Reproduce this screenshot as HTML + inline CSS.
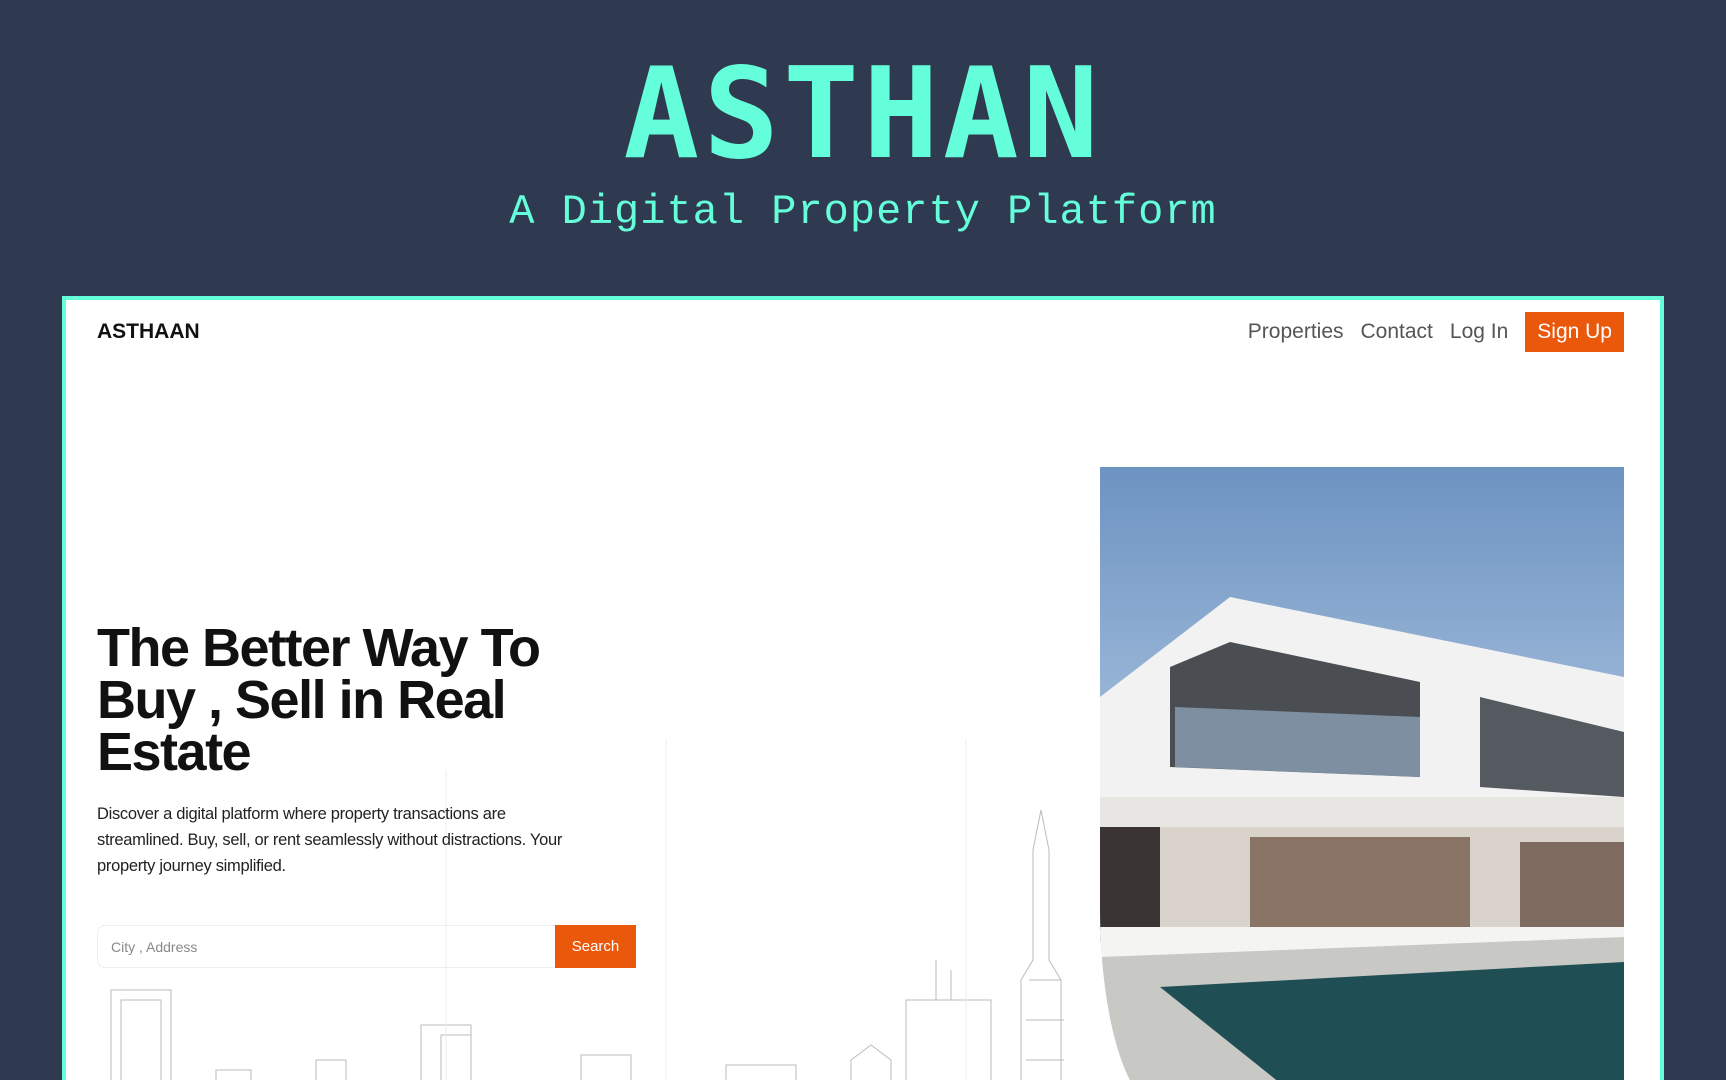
<!DOCTYPE html>
<html><head><meta charset="utf-8"><style>
*{margin:0;padding:0;box-sizing:border-box}
html,body{width:1726px;height:1080px;overflow:hidden}
body{background:#2f3950;font-family:"Liberation Sans",sans-serif;position:relative}
.t{position:absolute;left:0;width:1726px;text-align:center;color:#64ffda;font-family:"DejaVu Sans Mono","Liberation Mono",monospace}
.t1{top:44px;font-size:126px;font-weight:bold;line-height:140px;letter-spacing:4px}
.t2{top:184px;font-family:"Liberation Mono",monospace;font-size:42px;line-height:56px;letter-spacing:1px}
.frame{position:absolute;left:62px;top:296px;width:1602px;height:800px;background:#fff;border:4px solid #64ffda;border-bottom:none;overflow:hidden}
.logo{position:absolute;left:31px;top:20px;font-weight:bold;font-size:21px;color:#111}
.nav{position:absolute;right:36px;top:12px;display:flex;align-items:center;font-size:21px;color:#555}
.nav span{margin-left:17px}
.btn{background:#ea580c;color:#fff;padding:8px 12px;margin-left:17px}
h1{position:absolute;left:31px;top:322px;font-size:54px;line-height:52px;font-weight:900;color:#111;width:485px;letter-spacing:-1.5px}
p{position:absolute;left:31px;top:501px;width:560px;font-size:16.5px;line-height:26px;color:#222;letter-spacing:-0.3px;white-space:nowrap}
.search{position:absolute;left:31px;top:625px;width:539px;height:43px;border:1px solid #eee;border-radius:8px 0 0 8px;font-size:14px;color:#888;padding:13px 13px}
.sb{position:absolute;left:457px;top:-1px;width:81px;height:43px;background:#ea580c;color:#fff;text-align:center;line-height:43px;font-size:15px}
.img{position:absolute;left:1034px;top:167px;width:524px;height:640px;border-bottom-left-radius:60px 200px;overflow:hidden;background:linear-gradient(#6d93c2,#b4cbe3 60%,#d6e1ee)}
</style></head><body>
<div class="t t1">ASTHAN</div>
<div class="t t2">A Digital Property Platform</div>
<div class="frame">
<svg style="position:absolute;left:0;top:380px" width="1100" height="420" stroke="#bbb" fill="none" stroke-width="1">
<rect x="45" y="310" width="60" height="120"/><rect x="55" y="320" width="40" height="110"/>
<rect x="150" y="390" width="35" height="40"/><rect x="250" y="380" width="30" height="50"/>
<rect x="355" y="345" width="50" height="85"/><rect x="375" y="355" width="30" height="75"/>
<rect x="515" y="375" width="50" height="55"/><rect x="660" y="385" width="70" height="45"/>
<path d="M785 430V380l20-15 20 15v50"/><rect x="840" y="320" width="85" height="110"/><path d="M870 320v-40M885 320v-30"/>
<path d="M955 430V300l12-20V170l8-40 8 40v110l12 20v130"/><path d="M963 300h32M960 340h38M960 380h38"/>
<path d="M600 60V430M900 60v370M380 90v340" stroke="#eee"/>
</svg>
<div class="logo">ASTHAAN</div>
<div class="nav"><span>Properties</span><span>Contact</span><span>Log In</span><span class="btn">Sign Up</span></div>
<h1>The Better Way To Buy , Sell in Real Estate</h1>
<p>Discover a digital platform where property transactions are<br>streamlined. Buy, sell, or rent seamlessly without distractions. Your<br>property journey simplified.</p>
<div class="search">City , Address<div class="sb">Search</div></div>
<div class="img">
<svg width="524" height="640" viewBox="0 0 524 640">
<polygon points="0,230 130,130 524,210 524,360 0,330" fill="#f2f2f2"/>
<polygon points="70,200 130,175 320,215 320,310 70,300" fill="#4a4d52"/>
<polygon points="75,240 320,250 320,310 75,300" fill="#8aa0b5" opacity=".8"/>
<polygon points="380,230 524,265 524,330 380,320" fill="#555a60"/>
<rect x="0" y="330" width="524" height="90" fill="#e8e6e3"/>
<rect x="0" y="360" width="524" height="120" fill="#d9d3cc"/>
<rect x="150" y="370" width="220" height="100" fill="#8a7466"/>
<rect x="420" y="375" width="104" height="95" fill="#7e6a5e"/>
<rect x="0" y="360" width="60" height="115" fill="#3a3532"/>
<rect x="0" y="460" width="524" height="30" fill="#f4f4f2"/>
<polygon points="0,490 524,470 524,640 0,640" fill="#c8c8c4"/>
<polygon points="60,520 524,495 524,640 210,640" fill="#1f4e55"/>
</svg></div>
</div>
</body></html>
